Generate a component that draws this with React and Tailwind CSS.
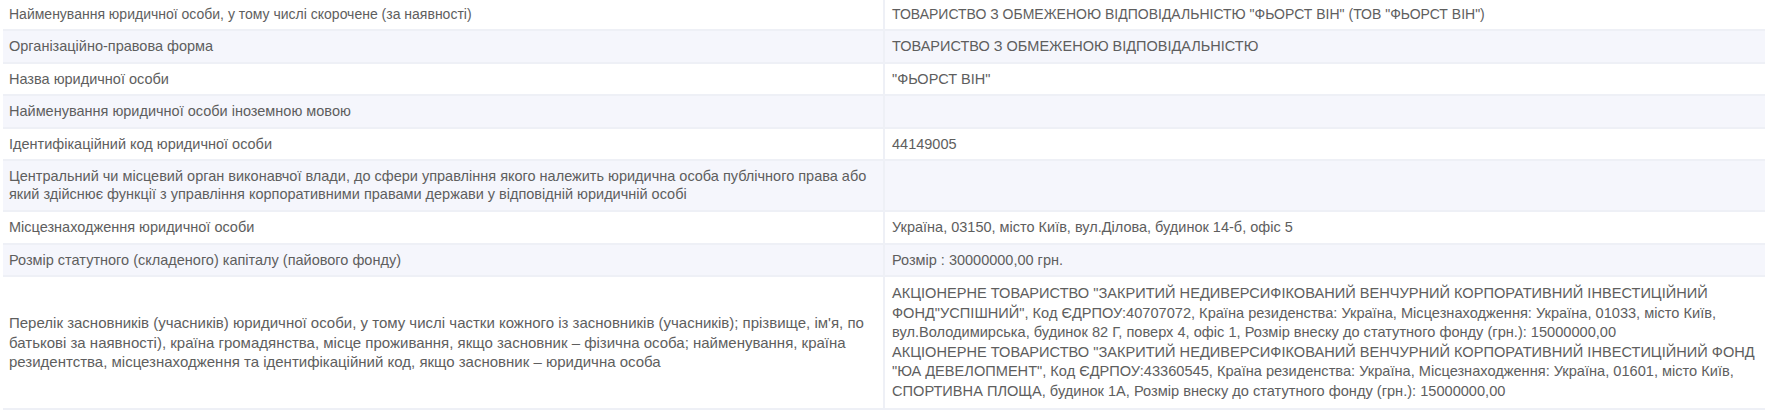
import React from "react";

const rows = [
  {
    label: "Найменування юридичної особи, у тому числі скорочене (за наявності)",
    value: ['ТОВАРИСТВО З ОБМЕЖЕНОЮ ВІДПОВІДАЛЬНІСТЮ "ФЬОРСТ ВІН" (ТОВ "ФЬОРСТ ВІН")'],
    size: "text-[14px] leading-[16.5px]",
  },
  { label: "Організаційно-правова форма", value: ["ТОВАРИСТВО З ОБМЕЖЕНОЮ ВІДПОВІДАЛЬНІСТЮ"] },
  { label: "Назва юридичної особи", value: ['"ФЬОРСТ ВІН"'] },
  { label: "Найменування юридичної особи іноземною мовою", value: [] },
  { label: "Ідентифікаційний код юридичної особи", value: ["44149005"] },
  {
    label:
      "Центральний чи місцевий орган виконавчої влади, до сфери управління якого належить юридична особа публічного права або який здійснює функції з управління корпоративними правами держави у відповідній юридичній особі",
    value: [],
    size: "text-[14.5px] leading-[17.5px]",
  },
  {
    label: "Місцезнаходження юридичної особи",
    value: ["Україна, 03150, місто Київ, вул.Ділова, будинок 14-б, офіс 5"],
  },
  {
    label: "Розмір статутного (складеного) капіталу (пайового фонду)",
    value: ["Розмір : 30000000,00 грн."],
  },
  {
    label:
      "Перелік засновників (учасників) юридичної особи, у тому числі частки кожного із засновників (учасників); прізвище, ім'я, по батькові за наявності), країна громадянства, місце проживання, якщо засновник – фізична особа; найменування, країна резидентства, місцезнаходження та ідентифікаційний код, якщо засновник – юридична особа",
    value: [
      'АКЦІОНЕРНЕ ТОВАРИСТВО "ЗАКРИТИЙ НЕДИВЕРСИФІКОВАНИЙ ВЕНЧУРНИЙ КОРПОРАТИВНИЙ ІНВЕСТИЦІЙНИЙ ФОНД"УСПІШНИЙ", Код ЄДРПОУ:40707072, Країна резиденства: Україна, Місцезнаходження: Україна, 01033, місто Київ, вул.Володимирська, будинок 82 Г, поверх 4, офіс 1, Розмір внеску до статутного фонду (грн.): 15000000,00',
      'АКЦІОНЕРНЕ ТОВАРИСТВО "ЗАКРИТИЙ НЕДИВЕРСИФІКОВАНИЙ ВЕНЧУРНИЙ КОРПОРАТИВНИЙ ІНВЕСТИЦІЙНИЙ ФОНД "ЮА ДЕВЕЛОПМЕНТ", Код ЄДРПОУ:43360545, Країна резиденства: Україна, Місцезнаходження: Україна, 01601, місто Київ, СПОРТИВНА ПЛОЩА, будинок 1А, Розмір внеску до статутного фонду (грн.): 15000000,00',
    ],
    size: "text-[15px] leading-[19.5px]",
    valueSize: "text-[14.6px] leading-[19.5px]",
  },
];

export default function App() {
  return (
    <div className="w-[1765px] bg-white pl-[3px] font-['Liberation_Sans',Arial,sans-serif] text-[#5e5e5e]">
      <table className="w-full border-collapse">
        <tbody>
          {rows.map((row, i) => {
            const size = row.size || "text-[14.5px] leading-[16.5px]";
            const valueSize = row.valueSize || size;
            const pad = i === 0 ? "pt-[5.5px] pb-[7px]" : "py-[7px]";
            return (
              <tr
                key={i}
                className={
                  (i % 2 === 1 ? "bg-[#f5f6fc] " : "bg-white ") +
                  "border-b-2 border-[#eef0f6]"
                }
              >
                <td
                  className={`w-[881px] border-r-2 border-[#eef0f6] pl-[6px] pr-2 align-middle ${pad} ${size}`}
                >
                  {row.label}
                </td>
                <td className={`pl-[7px] pr-2 align-middle ${pad} ${valueSize}`}>
                  {row.value.map((v, j) => (
                    <div key={j}>{v}</div>
                  ))}
                </td>
              </tr>
            );
          })}
        </tbody>
      </table>
    </div>
  );
}
